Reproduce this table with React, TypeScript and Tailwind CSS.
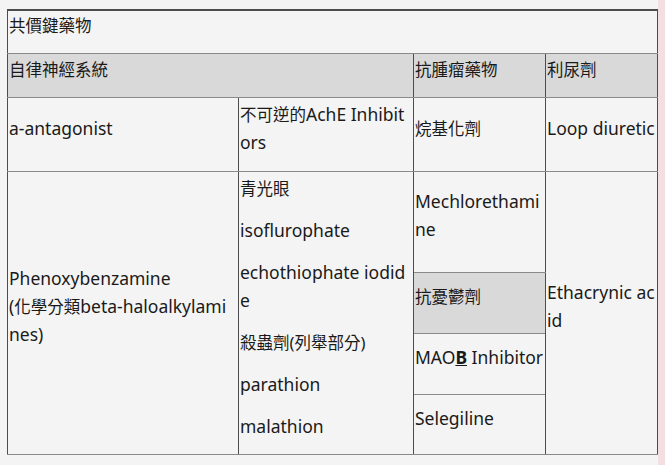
import React from "react";

const cell =
  "border-y border-y-[#8a8a8a] border-x border-x-[#4d4d4d] px-px align-middle";

function P({ children }: { children: React.ReactNode }) {
  return <p className="leading-[28px] whitespace-nowrap mb-[14px]">{children}</p>;
}

function C({ children }: { children: React.ReactNode }) {
  return <span className="text-[16.5px] leading-none">{children}</span>;
}

export default function App() {
  return (
    <div
      className="w-[665px] h-[465px] bg-[#f4f4f4] flex text-[17.5px] text-[#1a1a1a]"
      style={{ fontFamily: '"Noto Sans", "Noto Sans CJK TC", sans-serif' }}
    >
      <div className="w-[658px] pt-[9px] pl-[7px]">
        <table className="border-collapse table-fixed w-[650px] border-t-2 border-t-[#4d4d4d]">
          <colgroup>
            <col className="w-[231px]" />
            <col className="w-[175px]" />
            <col className="w-[132px]" />
            <col className="w-[112px]" />
          </colgroup>
          <tbody>
            <tr className="h-[43px]">
              <td colSpan={4} className={`${cell} border-t-[#4d4d4d]`}>
                <P><C>共價鍵藥物</C></P>
              </td>
            </tr>
            <tr className="h-[44px] bg-[#d9d9d9]">
              <td colSpan={2} className={cell}>
                <P><C>自律神經系統</C></P>
              </td>
              <td className={cell}>
                <P><C>抗腫瘤藥物</C></P>
              </td>
              <td className={cell}>
                <P><C>利尿劑</C></P>
              </td>
            </tr>
            <tr className="h-[74px]">
              <td className={cell}>
                <P>a-antagonist</P>
              </td>
              <td className={cell}>
                <P>
                  <C>不可逆的</C>AchE Inhibit
                  <br />
                  ors
                </P>
              </td>
              <td className={cell}>
                <P><C>烷基化劑</C></P>
              </td>
              <td className={cell}>
                <P>Loop diuretic</P>
              </td>
            </tr>
            <tr className="h-[101px]">
              <td rowSpan={4} className={cell}>
                <P>
                  Phenoxybenzamine
                  <br />
                  (<C>化學分類</C>beta-haloalkylami
                  <br />
                  nes)
                </P>
              </td>
              <td rowSpan={4} className={`${cell} !align-top pt-[2px]`}>
                <div className="h-[280px] overflow-hidden">
                  <P><C>青光眼</C></P>
                  <P>isoflurophate</P>
                  <P>
                    echothiophate iodid
                    <br />e
                  </P>
                  <P><C>殺蟲劑(列舉部分)</C></P>
                  <P>parathion</P>
                  <p className="leading-[28px] whitespace-nowrap">malathion</p>
                </div>
              </td>
              <td className={cell}>
                <P>
                  Mechlorethami
                  <br />
                  ne
                </P>
              </td>
              <td rowSpan={4} className={cell}>
                <P>
                  Ethacrynic ac
                  <br />
                  id
                </P>
              </td>
            </tr>
            <tr className="h-[61px]">
              <td className={`${cell} bg-[#d9d9d9]`}>
                <P><C>抗憂鬱劑</C></P>
              </td>
            </tr>
            <tr className="h-[61px]">
              <td className={cell}>
                <P>
                  MAO<b className="underline">B</b> Inhibitor
                </P>
              </td>
            </tr>
            <tr className="h-[60px]">
              <td className={cell}>
                <P>Selegiline</P>
              </td>
            </tr>
          </tbody>
        </table>
      </div>
      <div className="w-[7px] h-full bg-[#f3dfe2]" />
    </div>
  );
}
